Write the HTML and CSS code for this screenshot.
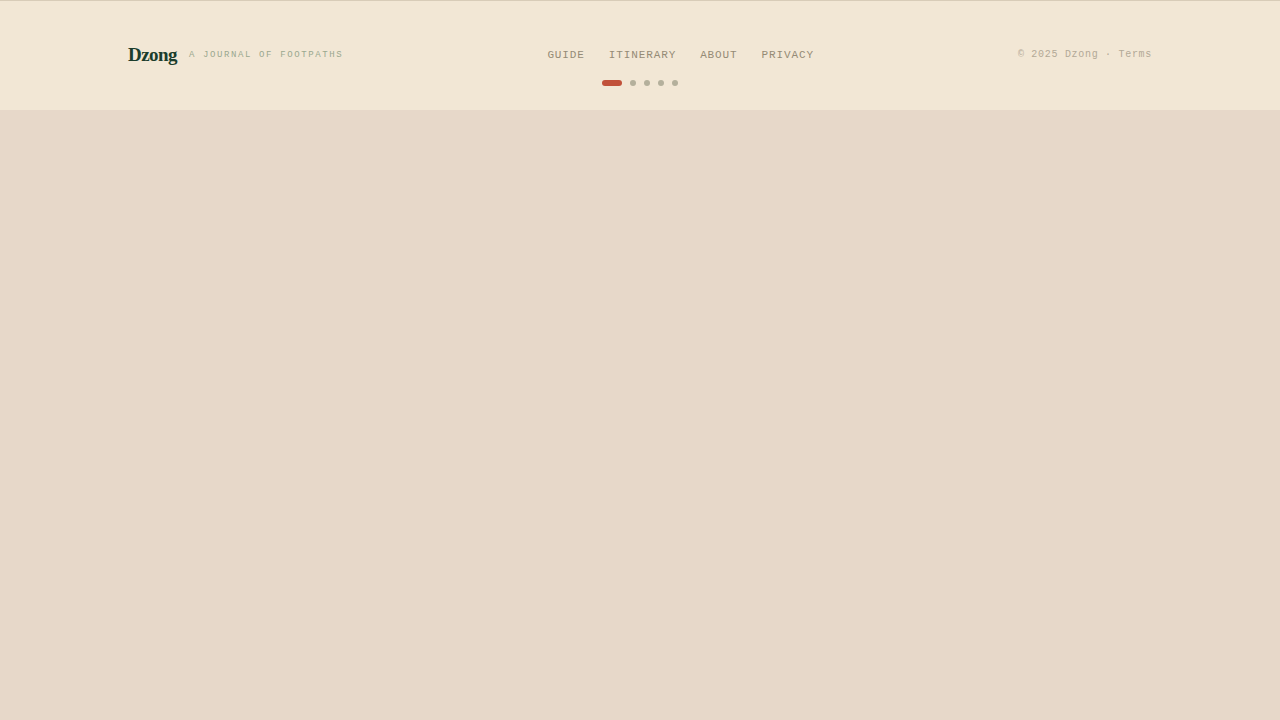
FILE: index.html
```html
<!DOCTYPE html>
<html lang="en">
<head>
    <meta charset="UTF-8">
    <meta name="viewport" content="width=device-width, initial-scale=1.0">
    <title>Dzong</title>
    <link rel="stylesheet" href="styles.css">
</head>
<body>
    <footer class="footer">
        <div class="footer-inner">
            <div class="brand">
                <span class="brand-name">Dzong</span>
                <span class="brand-tagline">A journal of footpaths</span>
            </div>
            <nav class="footer-nav">
                <a href="#guide">Guide</a>
                <a href="#itinerary">Itinerary</a>
                <a href="#about">About</a>
                <a href="#privacy">Privacy</a>
            </nav>
            <p class="legal">© 2025 Dzong · <a href="#terms">Terms</a></p>
        </div>
    </footer>
    <div class="dots">
        <button type="button" class="dot active" aria-label="Section 1"></button>
        <button type="button" class="dot" aria-label="Section 2"></button>
        <button type="button" class="dot" aria-label="Section 3"></button>
        <button type="button" class="dot" aria-label="Section 4"></button>
        <button type="button" class="dot" aria-label="Section 5"></button>
    </div>
</body>
</html>
```
FILE: styles.css
```css
*{margin:0;padding:0;box-sizing:border-box}
body{
    position: relative;
    background-color: #e7d8c9;
    font-family: "Liberation Mono", monospace;
}
a{
    color: inherit;
    text-decoration: none;
}

.footer{
    padding: 40px 10% 42px;
    background-color: #f2e7d5;
    border-top: 1px solid #d8ccb8;
}
.footer-inner{
    display: flex;
    justify-content: space-between;
    align-items: center;
}

.brand{
    display: flex;
    align-items: center;
    gap: 12px;
}
.brand-name{
    font-family: "Liberation Serif", serif;
    font-size: 19px;
    font-weight: 700;
    line-height: 27px;
    letter-spacing: -0.03em;
    color: #1b3d2c;
}
.brand-tagline{
    font-size: 9px;
    letter-spacing: 0.18em;
    text-transform: uppercase;
    color: #9aa78f;
}

.footer-nav{
    display: flex;
    gap: 24px;
    font-size: 11px;
    letter-spacing: 0.08em;
    text-transform: uppercase;
    color: #958b76;
}

.legal{
    font-size: 10px;
    letter-spacing: 0.07em;
    color: #b3a997;
}

/* page dots, over the footer */
.dots{
    position: absolute;
    top: 80px;
    left: 50%;
    display: flex;
    gap: 8px;
    transform: translateX(-50%);
}
.dot{
    width: 6px;
    height: 6px;
    border: none;
    border-radius: 3px;
    background-color: #b4b09c;
    cursor: pointer;
}
.dot.active{
    width: 20px;
    background-color: #c1513a;
}
```
